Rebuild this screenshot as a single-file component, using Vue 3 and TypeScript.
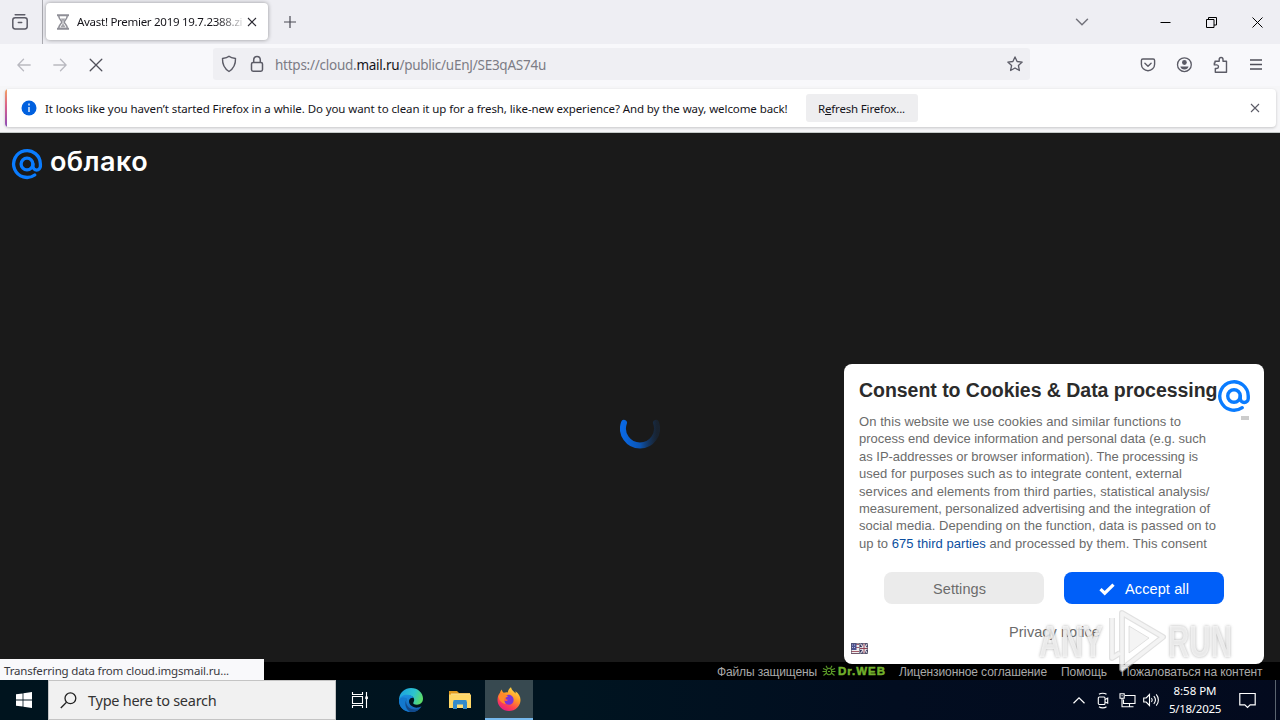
<script setup lang="ts">
import type { Directive } from 'vue'

/* Spreads a run of text to the given width by adjusting its tracking. */
const vFit: Directive<HTMLElement, number> = {
  mounted(el, binding) {
    const natural = el.getBoundingClientRect().width
    const count = (el.textContent ?? '').length
    if (natural > 0 && count > 0) {
      el.style.letterSpacing = `${(binding.value - natural) / count}px`
    }
  },
}

const consentLines: { text: string; width: number }[] = [
  { text: 'On this website we use cookies and similar functions to', width: 322 },
  { text: 'process end device information and personal data (e.g. such', width: 347 },
  { text: 'as IP-addresses or browser information). The processing is', width: 339 },
  { text: 'used for purposes such as to integrate content, external', width: 323 },
  { text: 'services and elements from third parties, statistical analysis/', width: 350.5 },
  { text: 'measurement, personalized advertising and the integration of', width: 351 },
  { text: 'social media. Depending on the function, data is passed on to', width: 357 },
]
</script>

<template>
  <div class="screen">
    <header class="tabs">
      <div class="view-btn">
        <svg width="18" height="18" viewBox="0 0 18 18" fill="none" stroke="#5b5b66" stroke-width="1.5" stroke-linecap="round">
          <path d="M4.2 1.8h9.6" />
          <rect x="1.8" y="4.7" width="14.4" height="11.3" rx="2.4" />
          <path d="M7.3 9.500h3.400" />
        </svg>
      </div>
      <div class="tab">
        <svg class="hourglass" width="14" height="16" viewBox="0 0 14 16" fill="none" stroke="#8f8f97" stroke-width="1.5">
          <path d="M1 1.2h12M1 14.8h12" stroke-width="2" />
          <path d="M2.7 1.5c0 4 3 4.500 3 6.500s-3 2.500-3 6.500M11.300 1.500c0 4-3 4.500-3 6.500s3 2.500 3 6.500" />
          <path d="M4.500 4.500h5L7.500 7v3l2.300 3.500H4.200L6.500 10V7z" fill="#a5a5ab" stroke="none" />
        </svg>
        <div class="tab-title"><span v-fit="172" class="t">Avast! Premier 2019 19.7.2388.zip</span></div>
        <svg width="10" height="10" viewBox="0 0 10 10" stroke="#2b2a33" stroke-width="1.1"><path d="M1 1l8 8M9 1L1 9" /></svg>
      </div>
      <svg class="plus" width="12" height="12" viewBox="0 0 12 12" stroke="#4a4a54" stroke-width="1.2"><path d="M6 0v12M0 6h12" /></svg>
      <div class="grow"></div>
      <svg class="all-tabs" width="14" height="8" viewBox="0 0 14 8" fill="none" stroke="#72727b" stroke-width="1.5" stroke-linecap="round"><path d="M1.500 1.200L7 6.700l5.500-5.500" /></svg>
      <div class="win"><svg width="11" height="11" viewBox="0 0 11 11" stroke="#000"><path d="M.5 5.500h10" /></svg></div>
      <div class="win"><svg width="11" height="11" viewBox="0 0 11 11" fill="none" stroke="#000"><path d="M.5 2.500h7.500v8H.5zM2.500 2.500v-2h8v7.500H8" /></svg></div>
      <div class="win"><svg width="11" height="11" viewBox="0 0 11 11" stroke="#000"><path d="M.5 .5l10 10M10.500 .5l-10 10" /></svg></div>
    </header>

    <nav class="toolbar">
      <div class="nav-btn"><svg width="14" height="14" viewBox="0 0 14 14" fill="none" stroke="#b9b9c0" stroke-width="1.3" stroke-linecap="round"><path d="M13.200 7H1M6.500 1.300L.9 7l5.600 5.700" /></svg></div>
      <div class="nav-btn"><svg width="14" height="14" viewBox="0 0 14 14" fill="none" stroke="#b9b9c0" stroke-width="1.3" stroke-linecap="round"><path d="M.8 7H13M7.500 1.300L13.100 7l-5.600 5.700" /></svg></div>
      <div class="nav-btn"><svg width="14" height="14" viewBox="0 0 14 14" fill="none" stroke="#50505a" stroke-width="1.3" stroke-linecap="round"><path d="M1.200 1.200l11.600 11.600M12.800 1.200L1.200 12.800" /></svg></div>
      <div class="urlbar">
        <svg width="16" height="18" viewBox="0 0 16 18" fill="none" stroke="#5b5b66" stroke-width="1.4" stroke-linejoin="round"><path d="M8 1.300c1.500 1.500 4 2 6.500 2.200.2 5.500-1.500 9.800-6.500 13C3 13.300 1.300 9 1.500 3.500 4 3.300 6.500 2.800 8 1.300z" /></svg>
        <svg class="lock" width="14" height="18" viewBox="0 0 14 18" fill="none" stroke="#5b5b66" stroke-width="1.5"><rect x="1.500" y="7.500" width="11" height="8.700" rx="1.600" /><path d="M3.700 7.300V4.900C3.700 2.800 5 1.400 7 1.400s3.300 1.400 3.300 3.500v2.400" /></svg>
        <span v-fit="271" class="t url">https://cloud.<b>mail.ru</b>/public/uEnJ/SE3qAS74u</span>
        <div class="grow"></div>
        <svg width="16" height="16" viewBox="0 0 16 16" fill="none" stroke="#5b5b66" stroke-width="1.300" stroke-linejoin="round"><path d="M8 .9l2.100 4.600 5.100.6-3.800 3.400 1 5L8 12l-4.400 2.500 1-5L.8 6.100l5.100-.6z" /></svg>
      </div>
      <div class="grow"></div>
      <div class="nav-btn"><svg width="16" height="16" viewBox="0 0 16 16" fill="none" stroke="#5b5b66" stroke-width="1.400" stroke-linecap="round" stroke-linejoin="round"><path d="M2.800 2h10.400c.8 0 1.400.6 1.400 1.400v3.800a6.600 6.600 0 0 1-13.200 0V3.400C1.400 2.600 2 2 2.800 2zM4.900 6.300L8 9.200l3.100-2.900" /></svg></div>
      <div class="nav-btn"><svg width="16" height="16" viewBox="0 0 16 16" fill="none"><circle cx="8.400" cy="7.700" r="6.900" stroke="#5b5b66" stroke-width="1.300" /><circle cx="8.400" cy="5.500" r="2.400" fill="#5b5b66" /><path d="M4.300 9.500h8.200c-.4 2-2 3-4.100 3s-3.700-1-4.100-3z" fill="#5b5b66" /></svg></div>
      <div class="nav-btn"><svg width="18" height="18" viewBox="-2 0 18 18" fill="none" stroke="#5b5b66" stroke-width="1.400" stroke-linejoin="round"><path d="M2 7V5.200h4.200V3.400a1.900 1.900 0 0 1 3.800 0v1.800h3.500v11H2.300v-3.700h1.400a1.800 1.800 0 0 0 0-3.600H1.300V7z" /></svg></div>
      <div class="nav-btn"><svg width="12" height="12" viewBox="0 0 12 12" stroke="#4f4f59" stroke-width="1.300"><path d="M0 1h12M0 5.500h12M0 10h12" /></svg></div>
    </nav>

    <div class="notice-wrap">
      <div class="notice">
        <svg class="info" width="16" height="16" viewBox="0 0 16 16"><circle cx="8" cy="8" r="7.500" fill="#0060df" /><path d="M8 3.600v1.900M8 7v5" stroke="#fff" stroke-width="1.300" /></svg>
        <span v-fit="742.500" class="t">It looks like you haven’t started Firefox in a while. Do you want to clean it up for a fresh, like-new experience? And by the way, welcome back!</span>
        <div class="refresh"><span v-fit="87" class="t">R<u>e</u>fresh Firefox...</span></div>
        <div class="grow"></div>
        <svg width="10" height="10" viewBox="0 0 10 10" stroke="#5b5b66" stroke-width="1.100"><path d="M1 1l8 8M9 1L1 9" /></svg>
      </div>
    </div>

    <main class="page">
      <div class="brand">
        <svg width="32" height="32" viewBox="0 0 32 32" fill="none" stroke="#0a7cff" stroke-width="3.300" stroke-linecap="round"><circle cx="16" cy="16" r="5.900" /><path d="M21.900 16v2.300a3.750 3.750 0 0 0 7.500 0V16A13.400 13.400 0 1 0 23.700 27" /></svg>
        <span v-fit="98" class="t">облако</span>
      </div>
      <div class="loader">
        <svg width="40" height="40" viewBox="0 0 40 40" fill="none">
          <defs><linearGradient id="spin" x1="0" x2="1" y1="0" y2="0"><stop offset="0" stop-color="#0a68e2" /><stop offset=".5" stop-color="#0b55b4" /><stop offset="1" stop-color="#173050" stop-opacity=".4" /></linearGradient></defs>
          <path d="M4 13.800A17 17 0 1 0 36 13.800" stroke="url(#spin)" stroke-width="6" stroke-linecap="round" />
        </svg>
      </div>
      <footer class="foot">
        <span v-fit="100" class="t">Файлы защищены</span>
        <span class="drweb">
          <svg width="14" height="12" viewBox="0 0 14 12" fill="none" stroke="#5b9a28" stroke-width="1.100"><ellipse cx="7" cy="6.500" rx="2.700" ry="3.200" /><path d="M4.500 5L1 3.500M4 6.500H.5M4.500 8L1.500 10.500M9.500 5L13 3.500M10 6.500h3.500M9.500 8l3 2.500M5.500 3.500L4 .8M8.500 3.500L10 .8M6 6.500h2" /></svg>
          <b v-fit="48" class="t">Dr.WEB</b>
        </span>
        <span v-fit="148" class="t">Лицензионное соглашение</span>
        <span v-fit="46" class="t">Помощь</span>
        <span v-fit="141.500" class="t">Пожаловаться на контент</span>
      </footer>

      <section class="consent">
        <div class="consent-top">
          <h1><span v-fit="358.500" class="t">Consent to Cookies &amp; Data processing</span></h1>
          <div class="mark">
            <svg width="34" height="34" viewBox="0 0 32 32" fill="none" stroke="#0a7cff" stroke-width="3.200" stroke-linecap="round"><circle cx="16" cy="16" r="5.900" /><path d="M21.900 16v2.300a3.750 3.750 0 0 0 7.500 0V16A13.400 13.400 0 1 0 23.700 27" /></svg>
            <i></i>
          </div>
        </div>
        <div class="copy">
          <div v-for="line in consentLines" :key="line.text"><span v-fit="line.width" class="t">{{ line.text }}</span></div>
          <div><span v-fit="348" class="t">up to <a>675 third parties</a> and processed by them. This consent</span></div>
        </div>
        <div class="actions">
          <div class="btn"><span v-fit="53" class="t">Settings</span></div>
          <div class="btn primary">
            <svg width="16" height="14" viewBox="0 0 16 14" fill="none" stroke="#fff" stroke-width="3.200"><path d="M1.500 7.200l4.200 4L14.500 2.600" /></svg>
            <span v-fit="64" class="t">Accept all</span>
          </div>
        </div>
        <div class="privacy"><span v-fit="91" class="t">Privacy notice</span></div>
        <svg class="flags" width="17" height="11" viewBox="0 0 17 11">
          <path d="M0 0h8v11H0z" fill="#eee" /><path d="M0 8.500h8M0 10.500h8M5 1.500h3M5 4.500h3" stroke="#a35a68" />
          <path d="M0 0h5.500v7H0z" fill="#4c5290" /><path d="M1 2h4M1 4.500h4" stroke="#b7b9dc" stroke-dasharray="1 1" />
          <path d="M9 0h8v11H9z" fill="#34345e" /><path d="M9 0l8 11M17 0L9 11" stroke="#d8d8e0" stroke-width="1.200" /><path d="M13 0v11M9 5.500h8" stroke="#fff" stroke-width="2.400" /><path d="M13 0v11M9 5.500h8" stroke="#914456" stroke-width="1.100" />
          <path d="M.4.4h16.200v10.200H.4zM8.500 0v11" fill="none" stroke="#54546c" stroke-width=".7" />
        </svg>
      </section>

      <div class="status"><span v-fit="225" class="t">Transferring data from cloud.imgsmail.ru...</span></div>

      <svg class="watermark" width="200" height="66" viewBox="1036 608 200 66">
        <g class="wm-text" fill="#fafafa" fill-opacity=".75">
          <text x="1039" y="657" textLength="64" lengthAdjust="spacingAndGlyphs">ANY</text>
          <text x="1168" y="657" textLength="64" lengthAdjust="spacingAndGlyphs">RUN</text>
        </g>
        <g fill="none" stroke-linejoin="round">
          <path d="M1122 613l41 24-41 32zM1112 618v40l8-5" stroke="#c9c9c9" stroke-opacity=".55" stroke-width="6" />
          <path d="M1122 613l41 24-41 32zM1112 618v40l8-5" stroke="#f7f7f7" stroke-opacity=".8" stroke-width="3.500" />
          <path d="M1129 626l20 12-20 15z" fill="#f0f0f0" fill-opacity=".7" stroke="#cfcfcf" stroke-opacity=".6" />
        </g>
      </svg>
    </main>

    <div class="taskbar">
      <div class="start"><svg width="16" height="16" viewBox="0 0 16 16" fill="#fff"><path d="M0 2.300L6.600 1.400v6.200H0zM7.400 1.300L16 0v7.600H7.400zM0 8.400h6.600v6.200L0 13.700zM7.400 8.400H16V16l-8.600-1.300z" /></svg></div>
      <div class="search">
        <svg width="17" height="17" viewBox="0 0 17 17" fill="none" stroke="#222" stroke-width="1.300"><circle cx="10.400" cy="6.300" r="5.400" /><path d="M6.500 10.300L.8 16" /></svg>
        <span v-fit="128.500" class="t">Type here to search</span>
      </div>
      <div class="app"><svg width="18" height="16" viewBox="0 0 18 16" fill="none" stroke="#fff" stroke-width="1.100"><path d="M1.500 0v2.500h10V0M1.500 16v-2.500h10V16M1.500 4.500h10v7h-10zM15.500 0v16" /><path d="M14.300 4.500h2.600v2.600h-2.600z" fill="#fff" stroke="none" /></svg></div>
      <div class="app edge">
        <svg width="26" height="26" viewBox="0 0 26 26">
          <defs><linearGradient id="e1" x1="0" y1=".2" x2="1" y2=".5"><stop offset="0" stop-color="#1b9fe0" /><stop offset=".6" stop-color="#2cc3cf" /><stop offset="1" stop-color="#5bdc68" /></linearGradient><linearGradient id="e2" x1="0" y1="0" x2="0" y2="1"><stop offset="0" stop-color="#1b8fe0" /><stop offset="1" stop-color="#1660b5" /></linearGradient></defs>
          <path d="M1 12C1.800 5 7 1 13 1c7 0 12 5 12 10.500 0 4-2.700 6.200-6 6.200-3 0-4.400-1-3.600-2.200 2-3 .2-7-4.400-7C6 8.500 2 10 1 14z" fill="url(#e1)" />
          <path d="M1 13C1.700 9.500 5.500 7.500 9.500 7.700c3.200.1 5.500 1.600 6.400 3.300-2.200-1-4.400.3-4.800 2.600-.7 4.200 4.200 7.800 9.100 6.900 1.500-.3 2.600-1 3.300-1.300C21.500 22.800 17.500 25 13.200 25 6 25 .5 19.500 1 13z" fill="url(#e2)" />
          <path d="M9 11.500c-3 3.700-2.700 10 3 13.400C5.500 24.700.7 19.500 1 13c1.200-2.600 4.500-3.400 8-1.500z" fill="#1379cf" />
          <path d="M9 11.500c-2.500 4 .2 10.500 7.500 11.100 2.700.2 5-1.100 6.200-2.100-2.300 3.500-6 4.900-10.200 4.500C7.300 22 6 15.500 9 11.500z" fill="#114a8b" />
        </svg>
      </div>
      <div class="app files">
        <svg width="22" height="20" viewBox="0 0 22 20"><path d="M0 1h8l2 2h11v4H0z" fill="#e29b1e" /><path d="M2 3.500h19V5H2z" fill="#f5df9a" /><path d="M0 4.500h22V18H0z" fill="#ffd766" /><path d="M4.500 10h13v8h-13z" fill="#3f97d9" /><path d="M4 12l2-2h10l2 2v7h-4v-4.500H8V19H4z" fill="#348bcb" /><path d="M8 14.500h6V18H8z" fill="#ffdd77" /></svg>
      </div>
      <div class="app active">
        <svg width="24" height="24" viewBox="0 0 24 24">
          <defs><linearGradient id="ff" x1=".8" y1="0" x2=".25" y2="1"><stop offset="0" stop-color="#ffe34a" /><stop offset=".4" stop-color="#ff9a26" /><stop offset=".72" stop-color="#ff4250" /><stop offset="1" stop-color="#e4188a" /></linearGradient></defs>
          <path d="M4.800 2.500c.2 1.500 1 2.800 2 3.300 1.200-.6 3-.7 4-.4C11 3.300 12.300 1.300 14 .3c.5 3 3 4 4.500 6.200.2-.8.1-1.500-.1-2.200C21.800 6.600 23.500 9.600 23.500 13A11.500 11 0 0 1 .5 13c0-3 .8-5.200 2.500-7.300.3-1.200.8-2.300 1.800-3.200z" fill="url(#ff)" />
          <path d="M9 8.500c3-1.800 7.500.3 7.600 4.200.1 3-2 5-4.800 5-3 0-5.200-2-5.200-4.400 1.500 1.200 3.500.6 4.800-.6-1.600.2-2.600-.6-3-2 .3-.4 1.900-.6 2.400-1.200-.6-.3-1.300-.6-1.800-1z" fill="#7a35d8" />
          <path d="M1.500 9c1.500-2 3.500-2.800 5.200-2.500 1.500 1 2.500 2.200 4.200 2.500-.6 1-2.500 1-3.200 2-.7 2.200-.2 4.500 1.300 6C5 16.800 1.700 13.500 1.500 9z" fill="#ff8a2a" />
        </svg>
      </div>
      <div class="grow"></div>
      <div class="tray"><svg width="12" height="7" viewBox="0 0 12 7" fill="none" stroke="#fff" stroke-width="1.200"><path d="M.5 6.300L6 .9l5.500 5.400" /></svg></div>
      <div class="tray"><svg width="12" height="17" viewBox="0 0 12 17" fill="none" stroke="#fff" stroke-width="1.100"><path d="M2 2.300C4 .8 7.500.8 9.500 2.300M2 14.700c2 1.500 5.500 1.500 7.500 0" /><rect x="1.300" y="5" width="6.700" height="7.500" rx="1" /><path d="M8 7.500l2.700-1.300v5L8 10" /></svg></div>
      <div class="tray"><svg width="17" height="15" viewBox="0 0 17 15" fill="none" stroke="#fff" stroke-width="1.100"><path d="M6 2.500h10v8H4.500v-4M10.500 10.500v3M7 13.800h7.500M1 .8h4.200v4.500H1zM3 5.300v8.500h4M2.500 2.800h1.200" /></svg></div>
      <div class="tray"><svg width="17" height="14" viewBox="0 0 17 14" fill="none" stroke="#fff" stroke-width="1.100"><path d="M.7 5v4h2.500L6.500 12.500V1.500L3.200 5zM8.500 5c.9 1.200.9 2.800 0 4M10.800 3.200c1.900 2.200 1.900 5.400 0 7.600M13.200 1.300c2.900 3.300 2.900 8.100 0 11.400" /></svg></div>
      <div class="clock"><span v-fit="43" class="t">8:58 PM</span><span v-fit="52" class="t">5/18/2025</span></div>
      <div class="center"><svg width="17" height="17" viewBox="0 0 17 17" fill="none" stroke="#fff" stroke-width="1.200"><path d="M.8 1.500h15.400v11.300h-5L8.500 15.500l-2.700-2.700h-5z" /></svg></div>
      <div class="peek"></div>
    </div>
  </div>
</template>

<style>
html,
body {
  margin: 0;
  background: #1a1a1a;
  overflow: hidden;
}
</style>

<style scoped>
.screen {
  width: 1280px;
  height: 720px;
  display: flex;
  flex-direction: column;
  overflow: hidden;
  position: relative;
  font-family: "Noto Sans", "Open Sans", sans-serif;
  font-size: 11.5px;
  color: #15141a;
}
.screen svg {
  display: block;
  flex: none;
}
.t {
  display: inline-block;
  white-space: pre;
}
.grow {
  flex: 1;
}
.tabs {
  height: 44px;
  flex: none;
  display: flex;
  align-items: center;
  background: #eeeef3;
}
.view-btn {
  width: 43px;
  height: 44px;
  box-sizing: border-box;
  padding-left: 11px;
  display: flex;
  align-items: center;
  border-right: 1px solid #aaaab0;
}
.tab {
  width: 222px;
  height: 37px;
  margin-left: 3px;
  margin-bottom: 1px;
  box-sizing: border-box;
  padding: 0 11px 0 10px;
  display: flex;
  align-items: center;
  background: #fff;
  border-radius: 4px;
  box-shadow: 0 0 4px rgba(0, 0, 0, 0.38);
}
.tab-title {
  width: 165px;
  margin: 0 5px 0 7px;
  overflow: hidden;
  -webkit-mask-image: linear-gradient(to right, #000 140px, transparent 170px);
  mask-image: linear-gradient(to right, #000 140px, transparent 170px);
}
.plus {
  margin-left: 16px;
}
.all-tabs {
  margin-right: 53px;
}
.win {
  width: 46px;
  display: flex;
  justify-content: center;
}
.toolbar {
  height: 42px;
  flex: none;
  display: flex;
  align-items: center;
  padding: 0 6px;
  background: #f8f8fb;
}
.nav-btn {
  width: 36px;
  display: flex;
  justify-content: center;
}
.urlbar {
  width: 817px;
  height: 32px;
  margin-left: 99px;
  margin-top: -2px;
  padding: 0 7px 0 8px;
  box-sizing: border-box;
  display: flex;
  align-items: center;
  background: #efeff3;
  border-radius: 3px;
}
.lock {
  margin-left: 13px;
}
.url {
  margin-left: 11px;
  margin-top: 2px;
  font-size: 13.5px;
  color: #7c7c85;
}
.url b {
  font-weight: 400;
  color: #15141a;
}
.notice-wrap {
  height: 47px;
  flex: none;
  box-sizing: border-box;
  padding: 3px 4px 5px 5px;
  background: #f6f6f8;
  border-bottom: 1px solid #c5cac8;
}
.notice {
  height: 38px;
  box-sizing: border-box;
  padding: 0 16px 0 14px;
  display: flex;
  align-items: center;
  background: linear-gradient(#f4a261, #d9608c 45%, #8b4bb8) left / 2px 100% no-repeat #fff;
  border-radius: 4px;
  box-shadow: 0 1px 3px rgba(0, 0, 0, 0.2);
}
.info {
  margin: 0 8px 0 2px;
}
.refresh {
  width: 112px;
  height: 28px;
  margin-left: 18.5px;
  box-sizing: border-box;
  padding-right: 1px;
  display: flex;
  align-items: center;
  justify-content: center;
  background: #eeeef0;
  border-radius: 3px;
}
.page {
  flex: 1;
  position: relative;
  display: flex;
  flex-direction: column;
  background: #1a1a1a;
}
.brand {
  height: 62px;
  display: flex;
  align-items: center;
  padding-left: 11px;
  gap: 7px;
  color: #fff;
  font: 600 27px/32px Inter, "Open Sans", sans-serif;
}
.brand .t {
  margin-top: -4px;
}
.loader {
  flex: 1;
  display: flex;
  justify-content: center;
  padding-top: 214px;
}
.foot {
  height: 18px;
  display: flex;
  align-items: center;
  justify-content: flex-end;
  gap: 14px;
  padding-right: 17.5px;
  background: #000;
  color: #a9a9a9;
  font: 12px/18px "Liberation Sans", Arial, sans-serif;
}
.foot > .t {
  padding-top: 1px;
}
.drweb {
  display: flex;
  align-items: center;
  gap: 2px;
  margin-left: -9px;
  margin-right: -1px;
  color: #72b02c;
  font-size: 11.5px;
}
.drweb b {
  -webkit-text-stroke: 0.5px #72b02c;
}
.consent {
  position: absolute;
  left: 844px;
  top: 231px;
  width: 420px;
  height: 300px;
  box-sizing: border-box;
  padding: 15px 13px 0 15px;
  background: #fff;
  border-radius: 8px;
  font-family: "Liberation Sans", Arial, sans-serif;
  color: #6b6b6b;
}
.consent-top {
  height: 34px;
  display: flex;
}
h1 {
  width: 358px;
  flex: none;
  margin: 0;
  font-size: 19.5px;
  line-height: 23px;
  font-weight: 700;
  color: #2b2b2b;
}
.mark {
  width: 34px;
  display: flex;
  flex-direction: column;
}
.mark i {
  flex: none;
  width: 8px;
  height: 4px;
  margin: 3px 0 0 24px;
  background: #ccc;
}
.copy {
  height: 144px;
  font-size: 13px;
  line-height: 17.4px;
}
.copy a {
  color: #0b4fa0;
}
.actions {
  display: flex;
  gap: 20px;
  padding-left: 25px;
  margin-top: 15px;
}
.btn {
  width: 160px;
  height: 32px;
  flex: none;
  box-sizing: border-box;
  padding-right: 9px;
  padding-top: 2px;
  display: flex;
  align-items: center;
  justify-content: center;
  background: #ebebeb;
  border-radius: 8px;
  font-size: 14.5px;
}
.btn.primary {
  gap: 10px;
  padding-right: 0;
  background: #005ff9;
  color: #fff;
}
.privacy {
  margin-top: 18px;
  height: 21px;
  line-height: 20px;
  text-align: center;
  padding-right: 1px;
  font-size: 14.5px;
}
.flags {
  margin: 0 0 0 -8px;
}
.status {
  position: absolute;
  left: 0;
  bottom: 0;
  width: 264px;
  height: 21px;
  box-sizing: border-box;
  padding: 2px 0 0 4px;
  line-height: 19px;
  background: #f9f9fb;
  color: #38383d;
}
.watermark {
  position: absolute;
  left: 1036px;
  top: 475px;
  font: 700 45px "Liberation Sans", Arial, sans-serif;
}
.wm-text {
  filter: drop-shadow(0 0 1.5px rgba(120, 120, 120, 0.75));
}
.taskbar {
  height: 40px;
  flex: none;
  display: flex;
  align-items: center;
  background: linear-gradient(to right, #00141e 0, #001420 45%, #020d20 70%, #030a1e);
  color: #fff;
}
.start {
  width: 48px;
  display: flex;
  justify-content: center;
}
.search {
  width: 288px;
  height: 40px;
  box-sizing: border-box;
  padding-left: 11px;
  display: flex;
  align-items: center;
  gap: 11px;
  background: #f1f1f1;
  border: 1px solid #c4c4c4;
  color: #333;
  font-size: 14.5px;
}
.app {
  width: 48px;
  height: 40px;
  display: flex;
  align-items: center;
  justify-content: center;
}
.app.edge {
  margin-left: 3px;
}
.app.files {
  margin-left: 1px;
}
.app.active {
  margin-left: 1px;
  box-sizing: border-box;
  border-bottom: 2px solid #76b9ed;
  background: #374950;
}
.tray {
  width: 24px;
  display: flex;
  justify-content: center;
}
.clock {
  width: 64px;
  display: flex;
  flex-direction: column;
  align-items: center;
  line-height: 18px;
}
.center {
  width: 40px;
  display: flex;
  justify-content: center;
}
.peek {
  width: 4px;
  height: 40px;
  margin-left: 8px;
  border-left: 1px solid #5a6470;
}
</style>
